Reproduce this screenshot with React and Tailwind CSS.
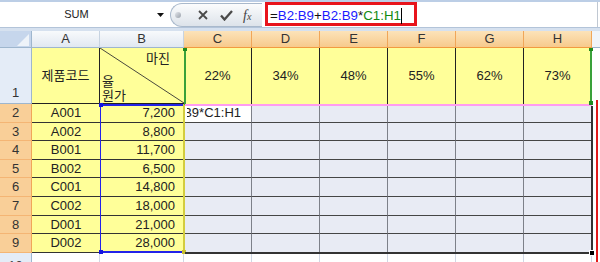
import React from 'react';

const pcts = ['22%', '34%', '48%', '55%', '62%', '73%'];
const data = [
  ['A001', '7,200'],
  ['A002', '8,800'],
  ['B001', '11,700'],
  ['B002', '6,500'],
  ['C001', '14,800'],
  ['C002', '18,000'],
  ['D001', '21,000'],
  ['D002', '28,000'],
];

// 수식 입력줄
const FormulaBar = () => (
  <div className="h-[31px] bg-[#d6e1ef]">
    <div className="h-[28px] bg-white border-t-2 border-t-[#bccee6] border-b border-b-[#b3c4d9] flex">
      <div className="w-[166px] flex items-center">
        <span className="w-[153px] text-center text-[11px] text-[#222]">SUM</span>
        <svg width="7" height="4" viewBox="0 0 7 4" className="ml-[4px] mt-[1px]">
          <path d="M0 0h7L3.5 4z" fill="#111" />
        </svg>
      </div>
      <div className="ml-[4px] mt-[1px] h-[24px] w-[92px] rounded-l-full border border-r-0 border-[#a9b9cc] bg-gradient-to-b from-[#fbfcfd] to-[#dde3ea] flex items-center">
        <span className="ml-[4px] w-[6px] h-[6px] rounded-full bg-gradient-to-br from-[#e4e7ec] to-[#9aa1ab]" />
        <svg width="10" height="10" viewBox="0 0 10 10" className="ml-[17px]">
          <path d="M1 1L9 9M9 1L1 9" stroke="#4a4a4a" strokeWidth="1.8" />
        </svg>
        <svg width="13" height="11" viewBox="0 0 13 11" className="ml-[12px]">
          <path d="M1 5.5L4.5 9.5L12 1" stroke="#4a4a4a" strokeWidth="2.3" fill="none" />
        </svg>
        <span className="ml-[10px] font-['Liberation_Serif',serif] italic text-[#444] leading-none">
          <span className="text-[14px]">f</span>
          <span className="text-[10px]">x</span>
        </span>
      </div>
      <div className="ml-[3px] w-[152px] h-[24px] border-[3px] border-[#e8141c] pl-[2px] pt-[4px] text-[13.3px] leading-[14px] whitespace-nowrap flex">
        <span className="text-[#111]">=</span>
        <span className="text-[#1a1aff]">B2:B9</span>
        <span className="text-[#111]">+</span>
        <span className="text-[#1a1aff]">B2:B9</span>
        <span className="text-[#111]">*</span>
        <span className="text-[#118a11]">C1:H1</span>
        <span className="w-px h-[16px] -mt-[1px] bg-black" />
      </div>
      <div className="flex-1 mr-[2px] border-r border-[#c0c8d2]" />
    </div>
  </div>
);

function App() {
  return (
    <div className="w-[600px] h-[262px] overflow-hidden bg-white text-[#222] font-['Liberation_Sans','Noto_Sans_CJK_KR',sans-serif]">
      <FormulaBar />

      <div className="relative h-[231px] grid grid-cols-[32px_68px_84px_68px_68px_68px_68px_68px_68px_1fr] grid-rows-[17px_56px_repeat(8,18.6px)_1fr] text-[13px]">
        {/* 열 머리글 */}
        <div className="bg-[#c6d6ec] border-r border-b border-[#9eb6ce] flex items-end justify-end pr-[2px] pb-[1px]">
          <svg width="12" height="12" viewBox="0 0 12 12">
            <path d="M12 0V12H0Z" fill="#eef3f9" />
          </svg>
        </div>
        {['A', 'B'].map((c) => (
          <div key={c} className="bg-gradient-to-b from-[#f8fafc] to-[#e1e8f1] border-r border-r-[#c7d3e1] border-b border-b-[#9eb6ce] flex items-center justify-center text-[#333]">
            {c}
          </div>
        ))}
        {['C', 'D', 'E', 'F', 'G', 'H'].map((c) => (
          <div key={c} className="bg-gradient-to-b from-[#fce3b9] to-[#f7ca8c] border-r border-r-[#f0a659] border-b border-b-[#f29b3f] flex items-center justify-center text-[#333]">
            {c}
          </div>
        ))}
        <div className="bg-[#f0f4f9] border-b border-[#9eb6ce]" />

        {/* 1행 */}
        <div className="bg-[#e4ecf7] border-r border-b border-[#9eb6ce] flex items-end justify-center pb-[1px] text-[#333]">1</div>
        <div className="bg-[#ffff99] border-r border-b border-[#222] flex items-center justify-center">제품코드</div>
        <div className="relative bg-[#ffff99] border-b border-[#222] flex flex-col pt-[4px] leading-[14px]">
          <svg className="absolute inset-0 w-full h-full" preserveAspectRatio="none" viewBox="0 0 84 55">
            <line x1="0" y1="0" x2="84" y2="55" stroke="#333" strokeWidth="0.9" />
          </svg>
          <span className="text-right pr-[14px]">마진</span>
          <span className="mt-[9px] pl-[2px]">율</span>
          <span className="pl-[2px]">원가</span>
        </div>
        {pcts.map((p) => (
          <div key={p} className="bg-[#ffff99] border-r border-[#222] flex items-center justify-center">
            {p}
          </div>
        ))}
        <div className="bg-white" />

        {/* 2~9행 */}
        {data.map(([code, cost], i) => (
          <React.Fragment key={code}>
            <div className="bg-[#f9cf98] border-r border-r-[#f0a659] border-b border-b-[#f4b574] flex items-center justify-center text-[#333]">
              {i + 2}
            </div>
            <div className="bg-[#ffff99] border-b border-[#333] flex items-center justify-center">{code}</div>
            <div className="bg-[#ffff99] border-b border-[#333] flex items-center justify-end pr-[9px]">{cost}</div>
            {pcts.map((p, j) =>
              i === 0 && j === 0 ? (
                <div key={p} className="bg-white border-r border-r-[#7d8089] border-b border-b-[#454545] flex items-center pl-[3px] pr-[10px]">
                  <div className="flex-1 overflow-hidden flex justify-end whitespace-nowrap">=B2:B9+B2:B9*C1:H1</div>
                </div>
              ) : (
                <div key={p} className="bg-[#e8ebf4] border-r border-r-[#7d8089] border-b border-b-[#454545]" />
              )
            )}
            <div className="bg-white" />
          </React.Fragment>
        ))}

        {/* 10행 */}
        <div className="bg-[#e4ecf7] border-r border-[#9eb6ce] flex justify-center pt-[3px] text-[#444]">10</div>
        {Array.from({ length: 8 }).map((_, k) => (
          <div key={k} className="bg-white border-r border-[#d0d7e5]" />
        ))}
        <div className="bg-white" />

        {/* 참조 테두리 B2:B9 */}
        <div className="absolute left-[100px] top-[73px] w-[84px] h-[149px] border-l border-t-2 border-b-2 border-[#2323e8]" />
        <div className="absolute left-[183px] top-[73px] w-[2px] h-[149px] bg-[#d3cc3e]" />
        <div className="absolute left-[99px] top-[72px] w-[4px] h-[4px] bg-[#1414e0]" />
        <div className="absolute left-[99px] top-[219px] w-[4px] h-[4px] bg-[#1414e0]" />
        <div className="absolute left-[182px] top-[219px] w-[4px] h-[4px] bg-[#c8c030]" />

        {/* 참조 테두리 C1:H1 */}
        <div className="absolute left-[184px] top-[17px] w-[2px] h-[57px] bg-[#3aa13a]" />
        <div className="absolute left-[590px] top-[17px] w-[2px] h-[57px] bg-[#3aa13a]" />
        <div className="absolute left-[185px] top-[73px] w-[407px] h-[2px] bg-[#ff9cf0]" />
        <div className="absolute left-[183px] top-[17px] w-[4px] h-[3px] bg-[#1f8a1f]" />
        <div className="absolute left-[589px] top-[17px] w-[4px] h-[3px] bg-[#1f8a1f]" />
        <div className="absolute left-[589px] top-[70px] w-[4px] h-[4px] bg-[#1f8a1f]" />

        {/* 선택 영역 C2:H9 */}
        <div className="absolute left-[591px] top-[75px] w-[2px] h-[148px] bg-[#333]" />
        <div className="absolute left-[185px] top-[221px] w-[408px] h-[2px] bg-[#333]" />
        <div className="absolute left-[589px] top-[219px] w-[6px] h-[6px] bg-black border border-white" />

        {/* 오른쪽 빨간 선 */}
        <div className="absolute left-[596px] top-[69px] w-[2px] h-[162px] bg-[#e21a1a]" />
      </div>
    </div>
  );
}

export default App;
